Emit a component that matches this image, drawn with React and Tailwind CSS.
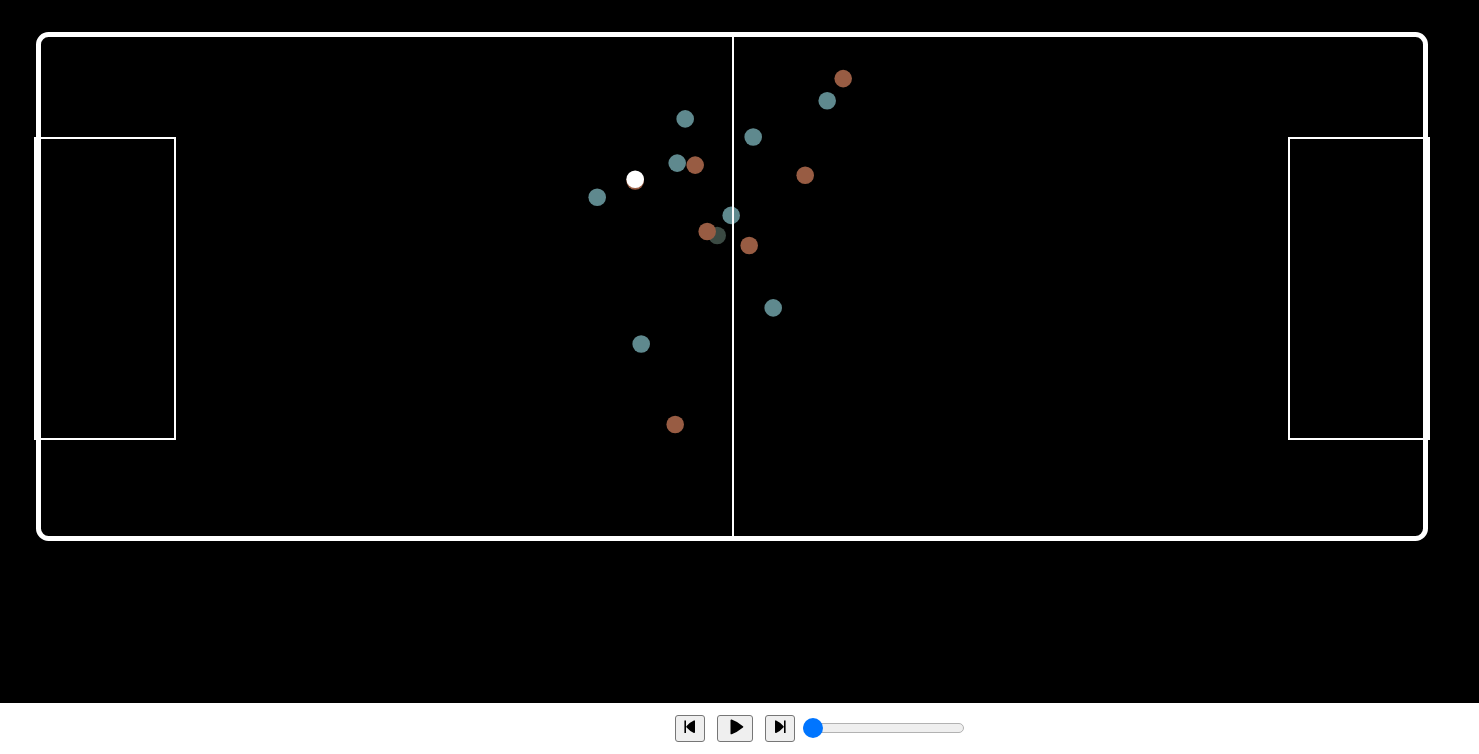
import { useState } from "react";

const TEAL = "#5f898e";
const RUST = "#985c43";

const players = [
  { x: 717.2, y: 235.5, color: "#3b4a43" },
  { x: 843.2, y: 78.6, color: RUST },
  { x: 695.2, y: 165.1, color: RUST },
  { x: 805.2, y: 175.2, color: RUST },
  { x: 707.2, y: 231.5, color: RUST },
  { x: 749.2, y: 245.5, color: RUST },
  { x: 675.2, y: 424.5, color: RUST },
  { x: 635.2, y: 181, color: RUST },
  { x: 827.2, y: 100.8, color: TEAL },
  { x: 685.2, y: 118.9, color: TEAL },
  { x: 753.2, y: 137, color: TEAL },
  { x: 677.2, y: 163.1, color: TEAL },
  { x: 597.2, y: 197.3, color: TEAL },
  { x: 731.2, y: 215.4, color: TEAL },
  { x: 773.2, y: 307.9, color: TEAL },
  { x: 641.2, y: 344, color: TEAL },
];

function Pitch() {
  return (
    <svg viewBox="0 0 1479 703" className="block w-full" role="img" aria-label="Player positions on the pitch">
      {players.map((p) => (
        <circle key={`${p.x}-${p.y}`} cx={p.x} cy={p.y} r="8.8" fill={p.color} />
      ))}
      <circle cx="635.2" cy="179.2" r="8.8" fill="#fff" />
      <g fill="none" stroke="#fff" strokeWidth="2">
        <rect x="38.5" y="34.5" width="1387" height="504" rx="10" strokeWidth="5" />
        <path d="M733 35V538" />
        <rect x="35" y="138" width="140" height="301" />
        <rect x="1289" y="138" width="140" height="301" />
      </g>
    </svg>
  );
}

function ControlButton({ label, onClick, width, children }) {
  return (
    <button
      type="button"
      aria-label={label}
      onClick={onClick}
      className={`flex h-[27px] ${width} items-start justify-center rounded-[3px] border border-[#767676] bg-[#efefef] pt-[3px] text-black`}
    >
      {children}
    </button>
  );
}

export default function App() {
  const [frame, setFrame] = useState(0);
  const step = (n) => setFrame((f) => Math.min(100, Math.max(0, f + n)));

  return (
    <div className="flex min-h-screen flex-col bg-white">
      <main className="bg-black">
        <Pitch />
      </main>
      <div className="flex items-start justify-center gap-2 pt-3 pl-40">
        <div className="flex gap-3">
          <ControlButton label="Previous frame" onClick={() => step(-1)} width="w-[30px]">
            <svg width="16" height="16" viewBox="0 0 16 16" fill="currentColor" stroke="currentColor">
              <path d="M3.2 1.4V14" strokeWidth="1.6" />
              <path d="M12.2 2.2V13.2C9.6 12 6.6 9.6 5 7.7C6.6 5.8 9.6 3.4 12.2 2.2Z" strokeWidth="1.6" strokeLinejoin="round" />
            </svg>
          </ControlButton>
          <ControlButton label="Play" onClick={() => step(1)} width="w-[36px]">
            <svg width="20" height="16" viewBox="0 0 20 16" fill="currentColor" stroke="currentColor">
              <path d="M6.4 1.4V14.4C10.4 13 14.6 10.2 17.4 7.9C14.6 5.6 10.4 2.8 6.4 1.4Z" strokeWidth="1.8" strokeLinejoin="round" />
            </svg>
          </ControlButton>
          <ControlButton label="Next frame" onClick={() => step(1)} width="w-[30px]">
            <svg width="16" height="16" viewBox="0 0 16 16" fill="currentColor" stroke="currentColor">
              <path d="M12.8 1.4V14" strokeWidth="1.6" />
              <path d="M3.8 2.2V13.2C6.4 12 9.4 9.6 11 7.7C9.4 5.8 6.4 3.4 3.8 2.2Z" strokeWidth="1.6" strokeLinejoin="round" />
            </svg>
          </ControlButton>
        </div>
        <input
          type="range"
          aria-label="Frame"
          min="0"
          max="100"
          value={frame}
          onChange={(e) => setFrame(Number(e.target.value))}
          className="mt-[3px] h-5 w-[161px] appearance-none bg-transparent [&::-webkit-slider-runnable-track]:h-[10px] [&::-webkit-slider-runnable-track]:rounded-full [&::-webkit-slider-runnable-track]:border [&::-webkit-slider-runnable-track]:border-[#b2b2b2] [&::-webkit-slider-runnable-track]:bg-[#efefef] [&::-webkit-slider-thumb]:-mt-[6px] [&::-webkit-slider-thumb]:-ml-px [&::-webkit-slider-thumb]:size-5 [&::-webkit-slider-thumb]:appearance-none [&::-webkit-slider-thumb]:rounded-full [&::-webkit-slider-thumb]:bg-[#0075ff]"
        />
      </div>
    </div>
  );
}
